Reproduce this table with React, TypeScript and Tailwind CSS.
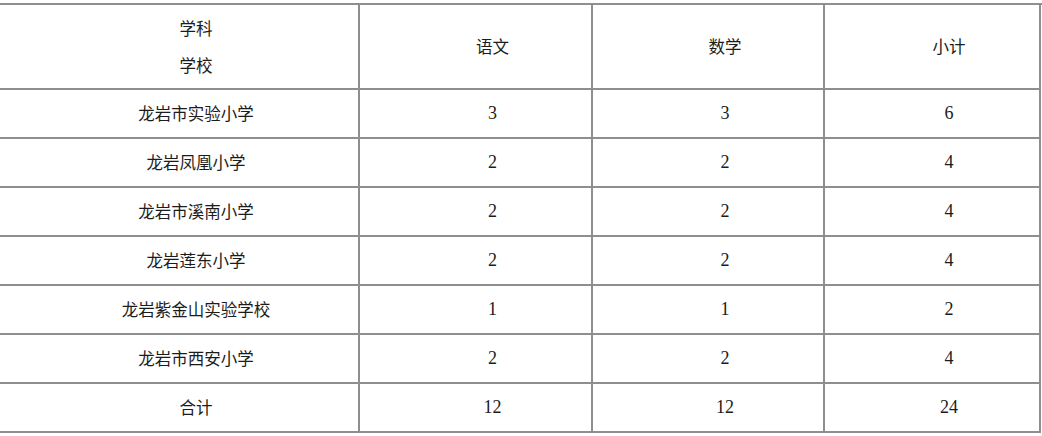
const rows: [string, string, string, string][] = [
  ["龙岩市实验小学", "3", "3", "6"],
  ["龙岩凤凰小学", "2", "2", "4"],
  ["龙岩市溪南小学", "2", "2", "4"],
  ["龙岩莲东小学", "2", "2", "4"],
  ["龙岩紫金山实验学校", "1", "1", "2"],
  ["龙岩市西安小学", "2", "2", "4"],
  ["合计", "12", "12", "24"],
];

const cjk = "font-['Noto_Sans_CJK_SC','Noto_Sans',sans-serif]";
const num = "font-['Liberation_Serif','Noto_Sans_CJK_SC',serif]";
const cell =
  "flex items-center justify-center pl-[34px] border-r-2 border-b-2 border-[#8e8e8e] text-[#1c1c1c]";

export default function App() {
  return (
    <div className="w-[1042px] h-[436px] bg-white overflow-hidden">
      <div className="mt-[3px] border-t-2 border-[#8e8e8e] grid grid-cols-[360px_233px_232px_216px] grid-rows-[85px_repeat(7,49px)]">
        <div className={`${cell} ${cjk} flex-col text-[16.5px] leading-[37px]`}>
          <span>学科</span>
          <span>学校</span>
        </div>
        <div className={`${cell} ${cjk} text-[16.5px]`}>语文</div>
        <div className={`${cell} ${cjk} text-[16.5px]`}>数学</div>
        <div className={`${cell} ${cjk} text-[16.5px]`}>小计</div>
        {rows.map((r) => (
          <div key={r[0]} className="contents">
            <div className={`${cell} ${cjk} text-[16.5px]`}>{r[0]}</div>
            <div className={`${cell} ${num} text-[18px]`}>{r[1]}</div>
            <div className={`${cell} ${num} text-[18px]`}>{r[2]}</div>
            <div className={`${cell} ${num} text-[18px]`}>{r[3]}</div>
          </div>
        ))}
      </div>
    </div>
  );
}
